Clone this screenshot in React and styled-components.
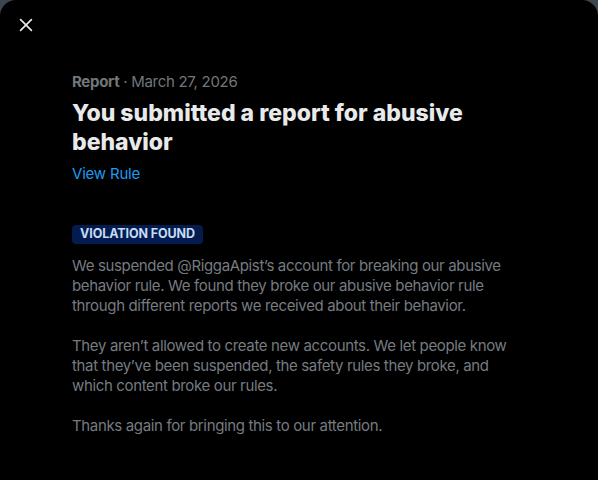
import React from "react";
import styled, { createGlobalStyle } from "styled-components";

const Global = createGlobalStyle`
  html, body { margin: 0; padding: 0; background: #3b4650; }
  body { font-family: Inter, "Noto Sans", "Liberation Sans", sans-serif; }
  * { box-sizing: border-box; }
`;

const Modal = styled.div`
  width: 598px;
  height: 480px;
  background: #000;
  border-radius: 16px 16px 0 0;
  position: relative;
  overflow: hidden;
`;

const CloseButton = styled.button`
  position: absolute;
  left: 10px;
  top: 9px;
  width: 32px;
  height: 32px;
  border: 0;
  background: transparent;
  padding: 0;
  display: flex;
  align-items: center;
  justify-content: center;
  color: #e7e9ea;
  cursor: pointer;
`;

const Content = styled.div`
  padding: 72px 72px 0 72px;
  display: flex;
  flex-direction: column;
`;

const Meta = styled.div`
  font-size: 15px;
  line-height: 20px;
  color: #71767b;
  letter-spacing: -0.3px;
`;

const MetaStrong = styled.span`
  font-weight: 700;
`;

const Title = styled.h1`
  margin: 7px 0 0;
  font-size: 23px;
  line-height: 29px;
  font-weight: 800;
  color: #e7e9ea;
  letter-spacing: 0;
`;

const Link = styled.a`
  margin-top: 7px;
  font-size: 15px;
  line-height: 20px;
  color: #1d9bf0;
  text-decoration: none;
  align-self: flex-start;
  letter-spacing: -0.2px;
`;

const Badge = styled.span`
  margin-top: 41px;
  align-self: flex-start;
  background: #031b4e;
  color: #c5dcf5;
  font-size: 12.5px;
  font-weight: 700;
  line-height: 18px;
  height: 19px;
  padding: 0 8px;
  border-radius: 4px;
  letter-spacing: -0.1px;
`;

const Body = styled.div`
  margin-top: 12px;
  display: flex;
  flex-direction: column;
  gap: 20px;
`;

const Para = styled.p`
  margin: 0;
  font-size: 15px;
  line-height: 20px;
  color: #767b80;
  letter-spacing: -0.35px;
`;

export default function App() {
  return (
    <>
      <Global />
      <Modal>
        <CloseButton aria-label="Close">
          <svg width="20" height="20" viewBox="0 0 24 24" fill="none">
            <path d="M5.5 5.5 18.5 18.5M18.5 5.5 5.5 18.5" stroke="currentColor" strokeWidth="2" strokeLinecap="round" />
          </svg>
        </CloseButton>
        <Content>
          <Meta>
            <MetaStrong>Report</MetaStrong> · March 27, 2026
          </Meta>
          <Title>You submitted a report for abusive behavior</Title>
          <Link href="#">View Rule</Link>
          <Badge>VIOLATION FOUND</Badge>
          <Body>
            <Para>
              We suspended @RiggaApist’s account for breaking our abusive behavior rule. We found they broke our abusive behavior rule through different reports we received about their behavior.
            </Para>
            <Para>
              They aren’t allowed to create new accounts. We let people know that they’ve been suspended, the safety rules they broke, and which content broke our rules.
            </Para>
            <Para>Thanks again for bringing this to our attention.</Para>
          </Body>
        </Content>
      </Modal>
    </>
  );
}
